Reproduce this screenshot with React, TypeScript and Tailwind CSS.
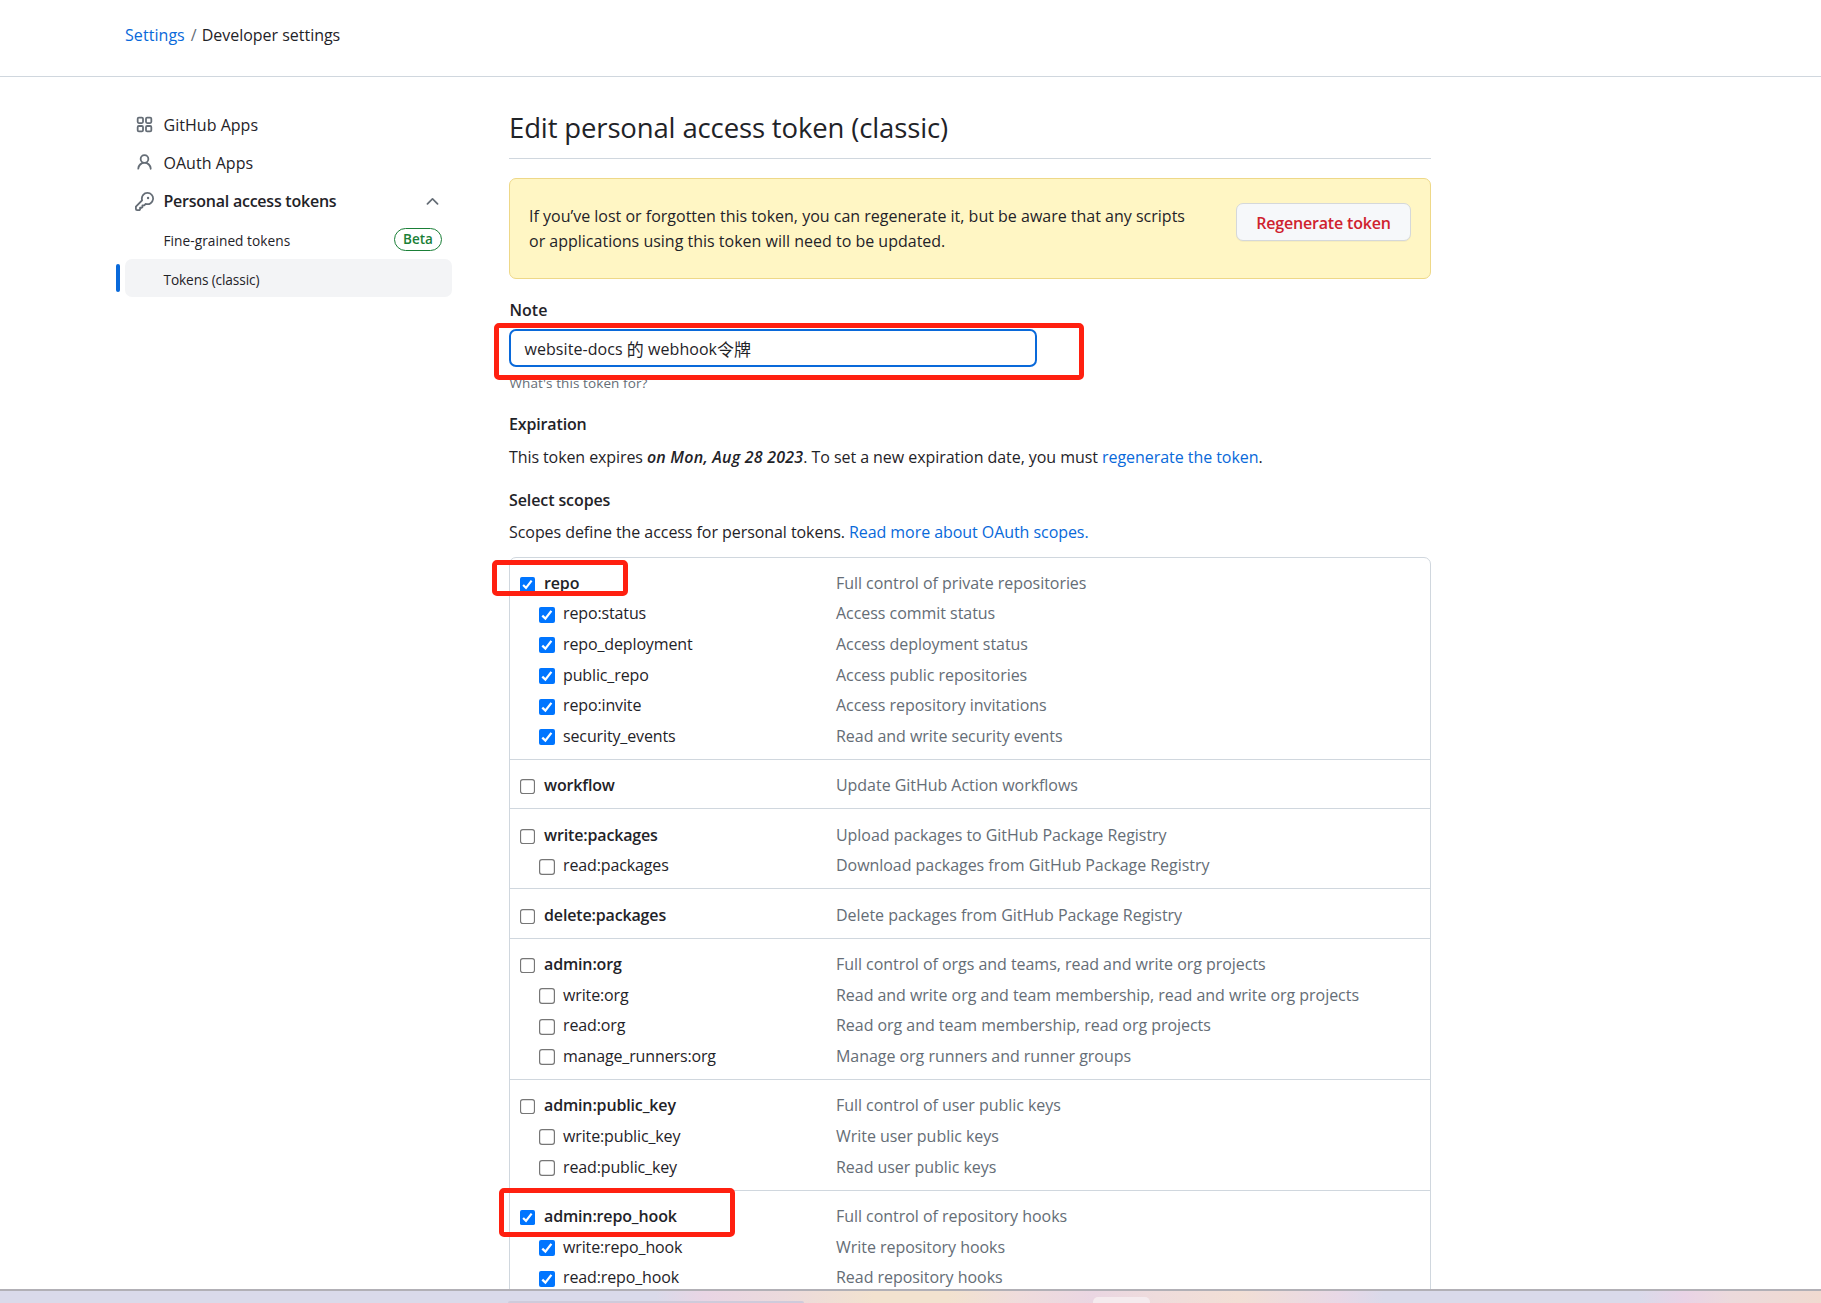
import type { ReactNode } from "react";

type Scope = { name: string; text: string };
type Group = { checked?: boolean; scopes: Scope[]; mark?: string };

const groups: Group[] = [
  {
    checked: true,
    mark: "left-[-18px] top-[2px] w-[136px] h-[36px]",
    scopes: [
      { name: "repo", text: "Full control of private repositories" },
      { name: "repo:status", text: "Access commit status" },
      { name: "repo_deployment", text: "Access deployment status" },
      { name: "public_repo", text: "Access public repositories" },
      { name: "repo:invite", text: "Access repository invitations" },
      { name: "security_events", text: "Read and write security events" },
    ],
  },
  { scopes: [{ name: "workflow", text: "Update GitHub Action workflows" }] },
  {
    scopes: [
      { name: "write:packages", text: "Upload packages to GitHub Package Registry" },
      { name: "read:packages", text: "Download packages from GitHub Package Registry" },
    ],
  },
  { scopes: [{ name: "delete:packages", text: "Delete packages from GitHub Package Registry" }] },
  {
    scopes: [
      { name: "admin:org", text: "Full control of orgs and teams, read and write org projects" },
      { name: "write:org", text: "Read and write org and team membership, read and write org projects" },
      { name: "read:org", text: "Read org and team membership, read org projects" },
      { name: "manage_runners:org", text: "Manage org runners and runner groups" },
    ],
  },
  {
    scopes: [
      { name: "admin:public_key", text: "Full control of user public keys" },
      { name: "write:public_key", text: "Write user public keys" },
      { name: "read:public_key", text: "Read user public keys" },
    ],
  },
  {
    checked: true,
    mark: "left-[-11px] top-[-3px] w-[236px] h-[49px]",
    scopes: [
      { name: "admin:repo_hook", text: "Full control of repository hooks" },
      { name: "write:repo_hook", text: "Write repository hooks" },
      { name: "read:repo_hook", text: "Read repository hooks" },
    ],
  },
];

function AppsIcon() {
  return (
    <svg viewBox="0 0 16 16" className="size-[19px]" fill="none" stroke="currentColor" strokeWidth="1.5" aria-hidden="true">
      <rect x="2.25" y="2.25" width="4.5" height="4.5" rx="1" />
      <rect x="9.25" y="2.25" width="4.5" height="4.5" rx="1" />
      <rect x="2.25" y="9.25" width="4.5" height="4.5" rx="1" />
      <rect x="9.25" y="9.25" width="4.5" height="4.5" rx="1" />
    </svg>
  );
}

function FilledIcon({ d }: { d: string }) {
  return (
    <svg viewBox="0 0 16 16" className="size-[19px]" fill="currentColor" aria-hidden="true">
      <path d={d} />
    </svg>
  );
}

const personPath =
  "M10.561 8.073a6 6 0 0 1 3.432 5.142.75.75 0 1 1-1.498.07 4.5 4.5 0 0 0-8.99 0 .75.75 0 0 1-1.498-.07 6.004 6.004 0 0 1 3.431-5.142 3.999 3.999 0 1 1 5.123 0ZM10.5 5a2.5 2.5 0 1 0-5 0 2.5 2.5 0 0 0 5 0Z";
const keyPath =
  "M10.5 0a5.499 5.499 0 1 1-1.288 10.848l-.932.932a.749.749 0 0 1-.53.22H7v.75a.749.749 0 0 1-.22.53l-.5.5a.749.749 0 0 1-.53.22H5v.75a.749.749 0 0 1-.22.53l-.5.5a.749.749 0 0 1-.53.22h-2A1.75 1.75 0 0 1 0 14.25v-2c0-.199.079-.389.22-.53l4.932-4.932A5.5 5.5 0 0 1 10.5 0Zm-4 5.5c-.001.431.069.86.205 1.269a.75.75 0 0 1-.181.768L1.5 12.56v1.69c0 .138.112.25.25.25h1.69l.06-.06v-1.19a.75.75 0 0 1 .75-.75h1.19l.06-.06v-1.19a.75.75 0 0 1 .75-.75h1.19l1.023-1.025a.75.75 0 0 1 .768-.18A4 4 0 1 0 6.5 5.5ZM11 6a1 1 0 1 1 0-2 1 1 0 0 1 0 2Z";
const chevronPath =
  "M3.22 10.53a.749.749 0 0 1 0-1.06l4.25-4.25a.749.749 0 0 1 1.06 0l4.25 4.25a.749.749 0 1 1-1.06 1.06L8 6.811 4.28 10.53a.749.749 0 0 1-1.06 0Z";

function Checkbox({ checked, small }: { checked?: boolean; small?: boolean }) {
  return (
    <svg viewBox="0 0 16 16" className={small ? "size-[15px] shrink-0" : "size-4 shrink-0"} aria-hidden="true">
      {checked ? (
        <>
          <rect width="16" height="16" rx="2" fill="#0075ff" />
          <path d="M3.3 8.6 6.4 11.6 12.4 3.9" fill="none" stroke="#fff" strokeWidth="2.3" />
        </>
      ) : (
        <rect x="0.6" y="0.6" width="14.8" height="14.8" rx="2.4" fill="#fff" stroke="#767676" strokeWidth="1.2" />
      )}
    </svg>
  );
}

function ScopeRow({ scope, checked, child }: { scope: Scope; checked?: boolean; child?: boolean }) {
  return (
    <div className="flex h-[30.6px] items-center">
      <div className={child ? "flex w-[326px] items-center gap-[8px] pl-[29px]" : "flex w-[326px] items-center gap-[9px] pl-2.5"}>
        <span className="flex pt-[2px]">
          <Checkbox checked={checked} small={!child} />
        </span>
        <span className={child ? "tracking-[-0.13px]" : "font-semibold tracking-[-0.15px]"}>{scope.name}</span>
      </div>
      <span className="tracking-[-0.04px] text-[#656d76]">{scope.text}</span>
    </div>
  );
}

function NavItem({ icon, label }: { icon: ReactNode; label: string }) {
  return (
    <a className="flex h-[38.3px] items-center gap-[9.5px] pl-[10px]">
      <span className="-mt-px text-[#656d76]">{icon}</span>
      <span className="tracking-[0.03px]">{label}</span>
    </a>
  );
}

export default function App() {
  return (
    <div className="flex h-[1303px] w-[1821px] flex-col overflow-hidden bg-white font-['Open_Sans','Noto_Sans_CJK_SC',sans-serif] text-[16px] leading-[25px] text-[#1f2328]">
      <header className="flex h-[77px] shrink-0 items-start border-b border-[#d0d7de] pt-[23px] pl-[125px]">
        <a className="tracking-[0.06px] text-[#0969da]">Settings</a>
        <span className="px-[6px] text-[#656d76]">/</span>
        <span className="-ml-px tracking-[-0.02px]">Developer settings</span>
      </header>

      <div className="flex min-h-0 flex-1 overflow-hidden">
        <nav className="w-[452px] shrink-0 pt-[29px] pl-[125px]">
          <NavItem icon={<AppsIcon />} label="GitHub Apps" />
          <NavItem icon={<FilledIcon d={personPath} />} label="OAuth Apps" />
          <div className="flex h-[38.3px] items-center gap-[9.5px] pr-[10px] pl-[10px]">
            <span className="text-[#656d76]">
              <FilledIcon d={keyPath} />
            </span>
            <span className="font-semibold tracking-[-0.24px]">Personal access tokens</span>
            <span className="ml-auto text-[#656d76]">
              <FilledIcon d={chevronPath} />
            </span>
          </div>
          <div className="flex h-[38.3px] items-center justify-between pr-[10px] pl-[38.5px] text-[13.7px]">
            <span className="pt-px tracking-[0.04px]">Fine-grained tokens</span>
            <span className="-mt-0.5 flex h-[23px] w-[48px] items-center justify-center rounded-full border border-[#1a7f37] pt-px text-[13.5px] font-semibold text-[#1a7f37]">
              Beta
            </span>
          </div>
          <div className="relative flex h-[38px] items-center rounded-[7px] bg-[#f3f4f6] pt-0.5 pl-[38.5px] text-[13.7px] tracking-[-0.13px]">
            <span className="absolute top-[5px] left-[-9px] h-7 w-1 rounded-sm bg-[#0969da]" />
            Tokens (classic)
          </div>
        </nav>

        <main className="ml-[57px] w-[922px]">
          <h1 className="flex h-[82px] items-end border-b border-[#d0d7de] pb-[11px] text-[27.5px] leading-[38px] tracking-[-0.14px]">
            Edit personal access token (classic)
          </h1>

          <section className="mt-[19px] flex h-[101px] justify-between rounded-[7px] border border-[#eed888] bg-[#fff6c4] pt-[24px] pr-[19px] pl-[19px]">
            <p className="pt-px whitespace-nowrap">
              If you’ve lost or forgotten this token, you can regenerate it, but be aware that any scripts
              <br />
              or applications using this token will need to be updated.
            </p>
            <button className="flex h-[38px] w-[175px] items-center justify-center rounded-[7px] border border-[#d5d8da] bg-[#f6f8fa] pt-0.5 font-semibold tracking-[-0.18px] whitespace-nowrap text-[#cf222e] shadow-[0_1px_0_rgba(31,35,40,0.04)]">
              Regenerate token
            </button>
          </section>

          <div className="relative mt-[18px]">
            <div className="h-[32px] pt-[1px] pl-[0.5px] font-semibold">Note</div>
            <div className="flex h-[38px] w-[528px] items-center rounded-[7px] border-2 border-[#0969da] pt-0.5 pl-[13.5px] tracking-[0.06px] whitespace-pre">
              website-docs <span className="text-[17px] tracking-[0]">的</span> webhook<span className="text-[17px] tracking-[0]">令牌</span>
            </div>
            <div className="h-[33px] pt-[4px] pl-[0.5px] text-[13.5px] tracking-[0.1px] text-[#656d76]">What's this token for?</div>
            <div className="absolute top-[26px] left-[-15px] h-[57px] w-[590px] rounded-[5px] border-5 border-[#ff2010]" />
          </div>

          <div className="mt-[12px] font-semibold tracking-[-0.15px]">Expiration</div>
          <p className="mt-[8px] whitespace-nowrap">
            <span className="tracking-[-0.09px]">This token expires </span>
            <em className="font-semibold tracking-[0.22px]">on Mon, Aug 28 2023</em>
            <span className="tracking-[-0.06px]">. To set a new expiration date, you must </span>
            <a className="tracking-[-0.05px] text-[#0969da]">regenerate the token</a>.
          </p>
          <div className="mt-[18px] font-semibold tracking-[-0.1px]">Select scopes</div>
          <p className="mt-[7px] tracking-[-0.06px] whitespace-nowrap">
            Scopes define the access for personal tokens. <a className="text-[#0969da]">Read more about OAuth scopes.</a>
          </p>

          <div className="mt-[12px] h-[760px] rounded-t-[7px] border border-[#d0d7de]">
            {groups.map((group, i) => (
              <div
                key={group.scopes[0].name}
                className={i === 0 ? "relative pt-[10px] pb-[7.3px]" : "relative border-t border-[#d0d7de] pt-[10.4px] pb-[7.5px]"}
              >
                {group.scopes.map((scope, j) => (
                  <ScopeRow key={scope.name} scope={scope} checked={group.checked} child={j > 0} />
                ))}
                {group.mark && <div className={"absolute rounded-[5px] border-5 border-[#ff2010] " + group.mark} />}
              </div>
            ))}
          </div>
        </main>
      </div>

      <footer className="flex h-[14px] shrink-0 items-end border-t-2 border-[#b2b0b6] bg-[linear-gradient(90deg,#dadaea_0%,#dadaea_36%,#e9d5e4_38.7%,#ecdadc_43%,#f2e2cf_48%,#f2e2cf_52%,#efdcdc_56%,#ead6e2_60%,#efdcdc_63.5%,#f2dfd5_68%,#e8d8e6_73.5%,#dadaea_76%,#dadaea_90%,#e9d3e6_92.5%,#ecdadc_95%,#f0dad0_100%)]">
        <div className="ml-[508px] h-[2px] w-[296px] rounded-t bg-[#cfcbdb]" />
        <div className="ml-[289px] h-[6px] w-[57px] rounded-t-[5px] bg-[#f5ebee]" />
      </footer>
    </div>
  );
}
